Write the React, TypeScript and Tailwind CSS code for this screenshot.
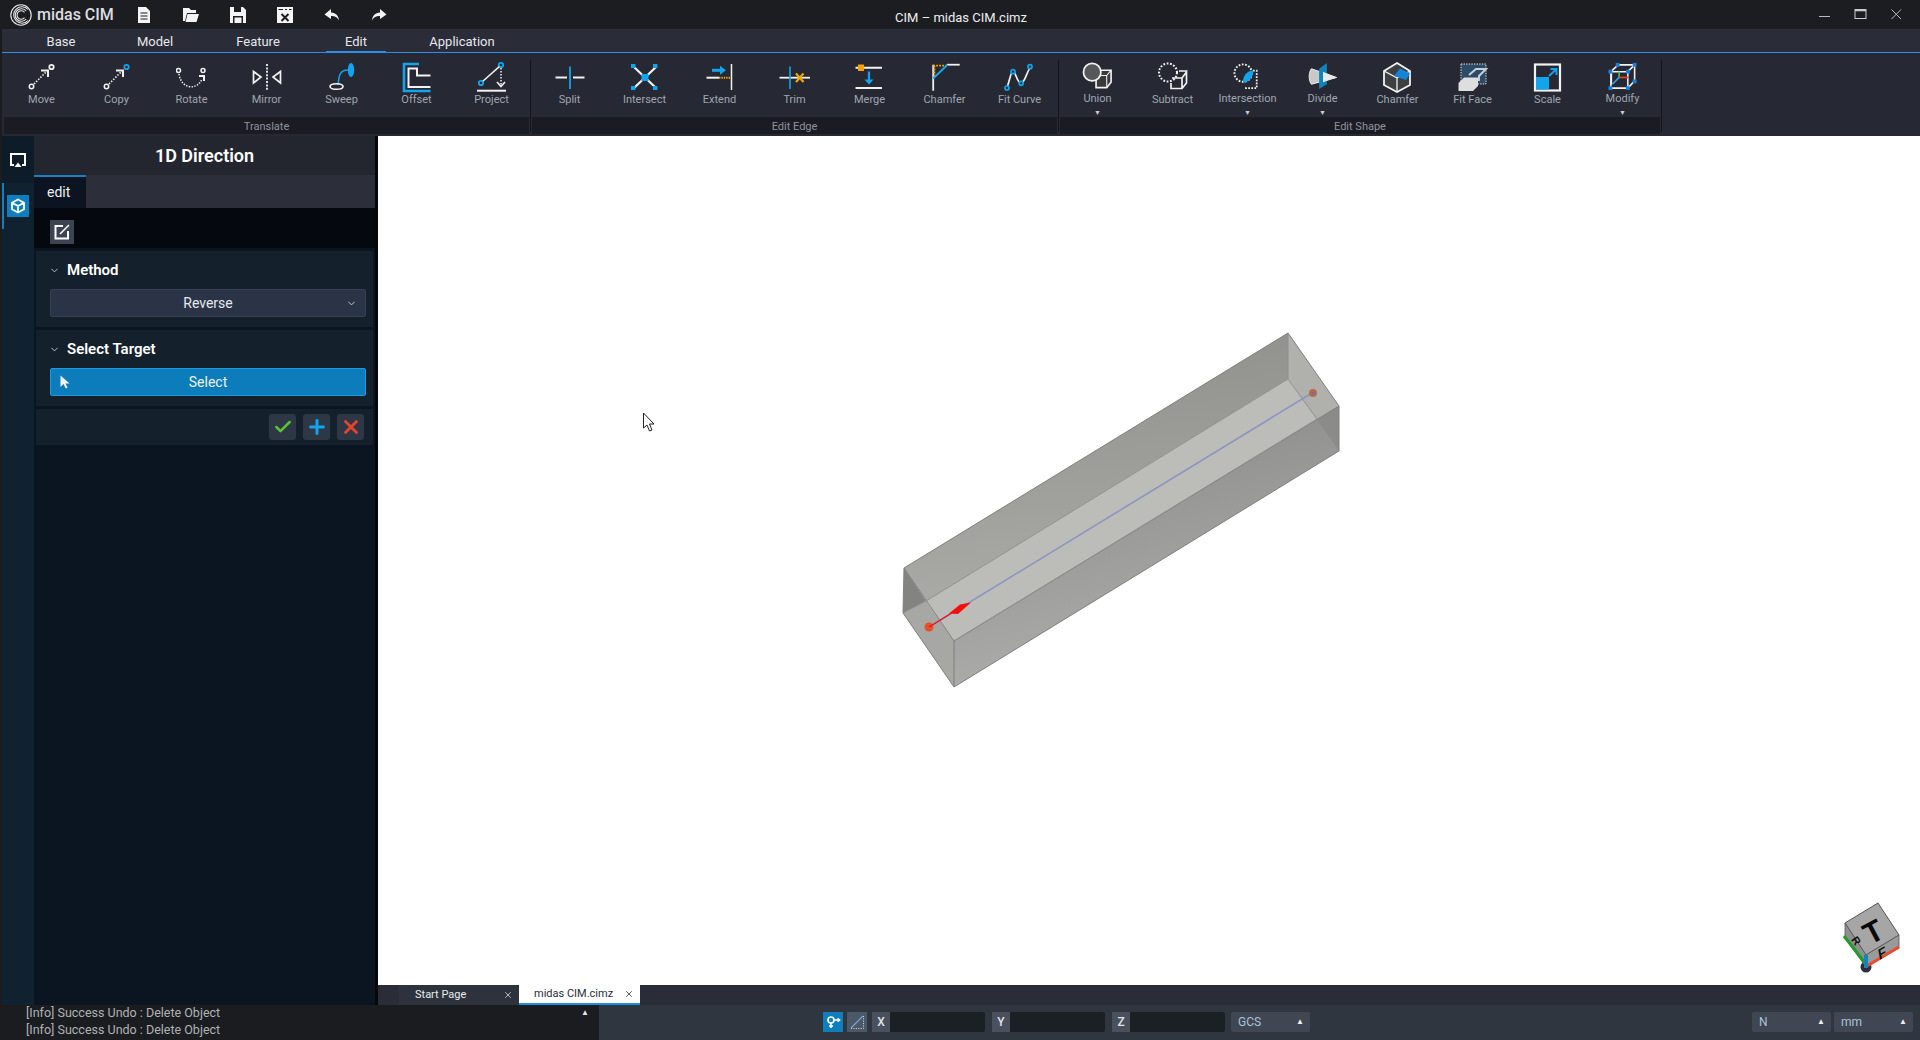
import React from 'react';
import { ChevronDown, Check, Plus, X } from 'lucide-react';

// ribbon icons, all drawn on a 32x32 box
const W = '#f2f2f2';
const B = '#12a5ee';
const O = '#f5a300';

const Ic: React.FC<{ children: React.ReactNode }> = ({ children }) => (
  <svg width="32" height="32" viewBox="0 0 32 32" fill="none" stroke={W} strokeWidth="1.5">
    {children}
  </svg>
);

const MoveGlyph = ({ tip }: { tip: string }) => (
  <>
    <circle cx="5.5" cy="25.5" r="2.2" />
    <circle cx="25.5" cy="6" r="2.2" stroke={tip} strokeWidth="1.8" />
    <path d="M8 23 L20 11" strokeDasharray="1.5 1.5" strokeWidth="1.6" />
    <path d="M15 9.5 H22 V16" strokeWidth="2" />
  </>
);

const Cube = ({ fill = 'none', dash }: { fill?: string; dash?: string }) => (
  <g strokeDasharray={dash} strokeWidth="1.7">
    <path d="M14 15 L19 9.5 H29.5 V22 L25 27.5 H14 Z" fill={fill} />
    <path d="M14 15 H25 V27.5 M25 15 L29.5 9.5" strokeWidth="1.1" />
  </g>
);

const ICONS: Record<string, React.ReactNode> = {
  move: <MoveGlyph tip={W} />,
  copy: <MoveGlyph tip={B} />,
  rotate: (
    <>
      <circle cx="2.5" cy="9.5" r="2" />
      <circle cx="27" cy="9.5" r="2" />
      <path d="M3 13 C5 28 21 30 26 18" strokeDasharray="1.4 1.4" />
      <path d="M23 15 H28 V20" strokeWidth="2" />
    </>
  ),
  mirror: (
    <>
      <path d="M16 3 V29" strokeDasharray="2 1.4" strokeWidth="1.8" />
      <path d="M2.5 10.5 L10 16 L2.5 22 Z" strokeWidth="1.7" />
      <path d="M29.5 10.5 L22 16 L29.5 22 Z" strokeWidth="1.7" />
    </>
  ),
  sweep: (
    <>
      <ellipse cx="25" cy="9" rx="3.2" ry="7" fill={B} stroke="none" />
      <path d="M22 9 C14 9 13 14 12 24" stroke={B} />
      <ellipse cx="10.5" cy="25.5" rx="6.5" ry="2.8" strokeWidth="1.6" />
    </>
  ),
  offset: (
    <>
      <path d="M29.5 30 H3 V3 H18" stroke={B} strokeWidth="2.6" />
      <path d="M29.5 26 H7.5 V7.5 H16 V14.5 H29.5" strokeWidth="2" />
    </>
  ),
  project: (
    <>
      <circle cx="25" cy="4" r="2.2" stroke={B} strokeWidth="1.8" />
      <circle cx="5" cy="22" r="2.2" stroke={B} strokeWidth="1.8" />
      <path d="M6.8 20.3 L23.3 5.6" />
      <path d="M25 7 V24" strokeDasharray="1.6 1.4" />
      <path d="M21 21 L25 25.5 L29 21" strokeWidth="1.6" />
      <path d="M1 29.7 H30" strokeWidth="2" />
    </>
  ),
  split: (
    <>
      <path d="M1.5 16.5 H13 M19 16.5 H30.5" strokeWidth="2" />
      <path d="M16 5.5 V28" stroke={B} strokeWidth="1.8" />
    </>
  ),
  intersect: (
    <>
      <path d="M5 6 L27 27 M27 6 L5 27" strokeWidth="2.2" />
      <g fill={B} stroke="none">
        <rect x="2" y="3" width="4.4" height="4" />
        <rect x="24" y="3" width="4.4" height="4" />
        <rect x="2" y="25" width="4.4" height="4" />
        <rect x="24" y="25" width="4.4" height="4" />
        <rect x="12.5" y="13" width="7" height="7" />
      </g>
    </>
  ),
  extend: (
    <>
      <path d="M2.5 16.7 H15" strokeWidth="2" />
      <path d="M15 16.7 H26" stroke={O} strokeWidth="2" strokeDasharray="1.4 1" />
      <path d="M27.5 3 V29" strokeWidth="1.5" />
      <path d="M8 9.3 H17" stroke={B} strokeWidth="3" />
      <path d="M16 4.8 L22 9.3 L16 13.8 Z" fill={B} stroke="none" />
    </>
  ),
  trim: (
    <>
      <path d="M0.5 16.7 H31" strokeWidth="1.8" />
      <path d="M11 5.5 V28" stroke={B} strokeWidth="1.6" />
      <path d="M17 12.5 L24.5 21 M24.5 12.5 L17 21" stroke={O} strokeWidth="2.2" />
    </>
  ),
  merge: (
    <>
      <path d="M1.5 6.7 H28 M1.5 27 H28" strokeWidth="2" />
      <rect x="4" y="3.5" width="6" height="6.5" fill={O} stroke="none" />
      <path d="M15 10.5 V20" stroke={B} strokeWidth="2.2" />
      <path d="M10.5 18.5 H19.5 L15 23.5 Z" fill={B} stroke="none" />
    </>
  ),
  chamfer: (
    <>
      <path d="M4.2 3.7 V29.7" strokeWidth="1.8" />
      <path d="M18 3.7 H30.7" strokeWidth="1.8" />
      <path d="M4.2 4.6 H18 M5.4 4.6 V17" stroke={O} strokeWidth="1.8" strokeDasharray="1.8 1.2" />
      <path d="M4.2 17.5 L18.5 3.7" stroke={B} strokeWidth="2" />
    </>
  ),
  fitcurve: (
    <>
      <path d="M3.5 25 C6 18 7 10 9 10.5 C12 11 13 22 17 22 C21 22 23 10 26 7" strokeWidth="1.7" />
      <g stroke={B} strokeWidth="1.7" fill="#262933">
        <circle cx="3" cy="27" r="2" />
        <circle cx="9" cy="10.7" r="2" />
        <circle cx="17.2" cy="22.3" r="2" />
        <circle cx="26" cy="5.7" r="2" />
      </g>
    </>
  ),
  union: (
    <>
      <Cube fill="#3a3a3d" />
      <circle cx="10" cy="11.5" r="9" fill="#55575a" strokeWidth="1.8" />
    </>
  ),
  subtract: (
    <>
      <path d="M15 17 H25 V27.5 H14 V22 M25 17 L29.5 11 V22 L25 27.5 M22 10 H29.5" strokeWidth="1.7" />
      <circle cx="11" cy="11.5" r="9" strokeDasharray="1.8 1.6" strokeWidth="2" />
    </>
  ),
  intersection: (
    <>
      <circle cx="11" cy="12.5" r="9" strokeDasharray="1.8 1.6" strokeWidth="2" />
      <path d="M13 28 H25 V10 H21" strokeDasharray="1.8 1.4" strokeWidth="1.8" />
      <path d="M11 22.5 C10 16 15 10 21.5 9.5 C22 16 17 22 11 22.5 Z" fill={B} stroke="none" />
    </>
  ),
  divide: (
    <>
      <path d="M4 8 L30 17 L4 24 C1 20 1 12 4 8 Z" fill="#c9c9c9" stroke="#f0f0f0" strokeWidth="1" />
      <path d="M12 8 L20 2 V24 L12 29 Z" fill="#1182b8" stroke="none" />
      <path d="M16 11 L30 17 L16 22 Z" fill="#e8e8e8" stroke="none" />
    </>
  ),
  chamfer3d: (
    <>
      <path d="M15 2 L28 10 V24 L15 31 L2 24 V10 Z" fill="#3e3f42" strokeWidth="1.8" />
      <path d="M2 10 L15 17 V31" strokeWidth="1.3" />
      <path d="M15 17 L28 10" strokeWidth="1.3" />
      <path d="M12 15 L18 7.5 L28 12.5 L24 19 Z" fill="#1583d6" stroke="none" />
    </>
  ),
  fitface: (
    <>
      <rect x="4" y="3" width="25" height="20" fill="#2c4b68" stroke="#e4e4e4" strokeDasharray="1.4 1.2" strokeWidth="1" />
      <path d="M12 14 L19 8 H29 L22 15 V20" stroke="#c9ced4" strokeWidth="2" />
      <path d="M1.5 22 L7 16.5 H21 V25 L16 30 H1.5 Z" fill="#dedede" stroke="none" />
    </>
  ),
  scale: (
    <>
      <rect x="3" y="3.5" width="25" height="26" strokeWidth="2.2" />
      <rect x="4" y="16" width="13" height="12.5" fill={B} stroke="none" />
      <path d="M17 15 L24 8.5 M18.5 8 H24.5 V14" stroke={B} strokeWidth="1.9" />
    </>
  ),
  modify: (
    <>
      <path d="M3.5 11 L11 4 H28 V20.5 L21 28 H3.5 Z M3.5 11 H21 V28 M21 11 L28 4" strokeWidth="1.6" />
      <path d="M4 12 V24" strokeWidth="1.6" />
      <g fill="#1a7fdc" stroke="none">
        <rect x="1" y="9" width="4" height="4" />
        <rect x="8.5" y="2" width="4" height="4" />
        <rect x="26" y="2" width="4" height="4" />
        <rect x="19" y="9" width="4" height="4" />
        <rect x="26" y="19" width="4" height="4" />
        <rect x="1" y="26" width="4" height="4" />
        <rect x="19" y="26" width="4" height="4" />
      </g>
      <path d="M12 17 V11" stroke="#36c24a" strokeWidth="1.8" />
      <path d="M12 17 H22" stroke="#e5442c" strokeWidth="1.8" />
      <path d="M12 17 L5 24" stroke="#2f9fe8" strokeWidth="1.8" />
    </>
  ),
};

type Tool = { label: string; icon: string; more?: boolean };

const GROUPS: { title: string; width: string; tools: Tool[] }[] = [
  {
    title: 'Translate',
    width: 'w-[525px]',
    tools: [
      { label: 'Move', icon: 'move' },
      { label: 'Copy', icon: 'copy' },
      { label: 'Rotate', icon: 'rotate' },
      { label: 'Mirror', icon: 'mirror' },
      { label: 'Sweep', icon: 'sweep' },
      { label: 'Offset', icon: 'offset' },
      { label: 'Project', icon: 'project' },
    ],
  },
  {
    title: 'Edit Edge',
    width: 'w-[525px]',
    tools: [
      { label: 'Split', icon: 'split' },
      { label: 'Intersect', icon: 'intersect' },
      { label: 'Extend', icon: 'extend' },
      { label: 'Trim', icon: 'trim' },
      { label: 'Merge', icon: 'merge' },
      { label: 'Chamfer', icon: 'chamfer' },
      { label: 'Fit Curve', icon: 'fitcurve' },
    ],
  },
  {
    title: 'Edit Shape',
    width: 'w-[600px]',
    tools: [
      { label: 'Union', icon: 'union', more: true },
      { label: 'Subtract', icon: 'subtract' },
      { label: 'Intersection', icon: 'intersection', more: true },
      { label: 'Divide', icon: 'divide', more: true },
      { label: 'Chamfer', icon: 'chamfer3d' },
      { label: 'Fit Face', icon: 'fitface' },
      { label: 'Scale', icon: 'scale' },
      { label: 'Modify', icon: 'modify', more: true },
    ],
  },
];

const MENU = [
  { label: 'Base', w: 'w-[118px]' },
  { label: 'Model', w: 'w-[70px]' },
  { label: 'Feature', w: 'w-[136px]' },
  { label: 'Edit', w: 'w-[60px]', active: true },
  { label: 'Application', w: 'w-[152px]' },
];

const Logo = () => (
  <svg width="22" height="22" viewBox="0 0 22 22" fill="none" stroke="#e8e8e8" strokeWidth="1.1">
    <circle cx="11" cy="11" r="10.2" />
    <path d="M18 5.5 A8.2 8.2 0 1 0 18 16.5" />
    <path d="M16.2 7 A6.2 6.2 0 1 0 16.2 15" />
    <path d="M14.5 8.3 A4.2 4.2 0 1 0 14.5 13.7" />
  </svg>
);

const QuickIcons = () => (
  <div className="flex items-center gap-[27px] ml-[20px]">
    <svg width="20" height="20" viewBox="0 0 20 20">
      <path d="M4 2 H12 L16 6 V18 H4 Z" fill="#f4f4f4" />
      <path d="M6.5 8 H13.5 M6.5 11 H13.5 M6.5 14 H13.5" stroke="#1c1d21" strokeWidth="1" />
    </svg>
    <svg width="20" height="20" viewBox="0 0 20 20">
      <path d="M2 3 H8 L10 5 H15 V8 H6 L4 16 H2 Z" fill="#f4f4f4" />
      <path d="M6.5 9 H18 L15.5 17 H4.5 Z" fill="#f4f4f4" />
    </svg>
    <svg width="20" height="20" viewBox="0 0 20 20">
      <path d="M2 2 H15 L18 5 V18 H2 Z" fill="#f4f4f4" />
      <rect x="6" y="2" width="7" height="5" fill="#1c1d21" />
      <rect x="5" y="11" width="10" height="7" fill="#1c1d21" />
      <rect x="6.5" y="12.5" width="7" height="5.5" fill="#f4f4f4" />
    </svg>
    <svg width="20" height="20" viewBox="0 0 20 20">
      <rect x="2" y="2" width="16" height="16" fill="#f4f4f4" />
      <path d="M3.5 4.5 H8 M10 4.5 H12 M14 4.5 H16.5" stroke="#1c1d21" strokeWidth="1.2" />
      <path d="M6.5 9 L13.5 16 M13.5 9 L6.5 16" stroke="#1c1d21" strokeWidth="2" />
    </svg>
    <svg width="20" height="20" viewBox="0 0 20 20">
      <path d="M9 4 L2.5 9.5 L9 14 V11 C13 11 15 12 17 15.5 C16.5 10.5 14 8 9 7.5 Z" fill="#f4f4f4" />
    </svg>
    <svg width="20" height="20" viewBox="0 0 20 20">
      <path d="M11 4 L17.5 9.5 L11 14 V11 C7 11 5 12 3 15.5 C3.5 10.5 6 8 11 7.5 Z" fill="#f4f4f4" />
    </svg>
  </div>
);

const RibbonGroup: React.FC<(typeof GROUPS)[number]> = ({ title, width, tools }) => (
  <div className={`${width} flex flex-col shrink-0`}>
    <div className="h-[64px] flex">
      {tools.map((t) => (
        <div key={t.label + t.icon} className="w-[75px] flex flex-col items-center pt-[8px]">
          <Ic>{ICONS[t.icon]}</Ic>
          <div className="text-[11px] leading-[14px] text-[#a0a6b2] whitespace-nowrap">{t.label}</div>
          {t.more && <div className="text-[7px] leading-[8px] mt-[3px] text-[#c8ccd2]">▼</div>}
        </div>
      ))}
    </div>
    <div className="h-[17px] bg-[#1b1c23] text-center text-[11px] leading-[19px] text-[#8f939d]">{title}</div>
  </div>
);

const Sep: React.FC<{ className: string }> = ({ className }) => (
  <div className={`${className} shrink-0 flex justify-center pt-[7px] pb-[2px]`}>
    <div className="w-[1px] bg-[#14151b]" />
  </div>
);

const SectionHead: React.FC<{ title: string }> = ({ title }) => (
  <div className="h-[38px] flex items-center pl-[13px] gap-[7px]">
    <ChevronDown size={11} color="#c8ced6" strokeWidth={2} />
    <span className="text-[15px] font-semibold text-white">{title}</span>
  </div>
);

const ActionBtn: React.FC<{ children: React.ReactNode }> = ({ children }) => (
  <div className="w-[27px] h-[26px] rounded-[3px] bg-[#2e3745] flex items-center justify-center">{children}</div>
);

const Panel = () => (
  <div className="w-[376px] shrink-0 flex bg-[#05070b]">
    <div className="w-[32px] shrink-0 bg-[#10212f] flex flex-col">
      <div className="h-[47px] bg-[#0e1c2a] flex items-center justify-center">
        <svg width="18" height="18" viewBox="0 0 18 18" fill="none" stroke="#fff" strokeWidth="2">
          <path d="M5 14 H2 V3 H16 V14 H13" />
          <path d="M5.5 16 L9 11.5 L12.5 16 Z" fill="#fff" stroke="none" />
        </svg>
      </div>
      <div className="h-[46px] border-l-2 border-[#1180c0] flex items-center justify-center pr-[2px]">
        <div className="w-[22px] h-[22px] bg-[#0e7fbc] flex items-center justify-center">
          <svg width="16" height="16" viewBox="0 0 16 16" fill="none" stroke="#fff" strokeWidth="1.8">
            <path d="M8 1.5 L14 4.7 V11.3 L8 14.5 L2 11.3 V4.7 Z M2 4.7 L8 8 L14 4.7 M8 8 V14.5" />
          </svg>
        </div>
      </div>
    </div>

    <div className="w-[341px] shrink-0 flex flex-col bg-[#0b1522]">
      <div className="h-[39px] bg-[#23262e] flex items-center justify-center text-[18px] font-semibold text-white">1D Direction</div>
      <div className="h-[33px] bg-[#2c2f39] flex">
        <div className="w-[52px] border-t-2 border-[#1c7fc4] bg-[#0b1420] pl-[13px] text-[14px] leading-[31px] text-[#eef0f3]">edit</div>
      </div>
      <div className="h-[40px] bg-[#05090f] flex items-start pl-[16px] pt-[12px]">
        <div className="w-[24px] h-[24px] bg-[#3b4450] flex items-center justify-center">
          <svg width="18" height="18" viewBox="0 0 18 18" fill="none" stroke="#fff" strokeWidth="2">
            <path d="M10 3 H2.5 V15.5 H15 V8" />
            <path d="M7 11 L16 2" strokeWidth="1.6" />
          </svg>
        </div>
      </div>

      <div className="mx-[2px] mt-[3px] h-[76px] bg-[#15202d] flex flex-col">
        <SectionHead title="Method" />
        <div className="ml-[14px] mr-[7px] h-[28px] rounded-[2px] bg-[#2b3446] border border-[#364053] flex items-center relative justify-center text-[14px] text-[#e6e9ee]">
          Reverse
          <ChevronDown size={11} color="#d0d4da" strokeWidth={2} className="absolute right-[8px]" />
        </div>
      </div>

      <div className="mx-[2px] mt-[3px] h-[76px] bg-[#15202d] flex flex-col">
        <SectionHead title="Select Target" />
        <div className="ml-[14px] mr-[7px] h-[28px] rounded-[2px] bg-[#0c7cba] border border-[#1a9be0] flex items-center relative justify-center text-[14px] text-[#eef3f7]">
          <svg width="10" height="14" viewBox="0 0 10 14" className="absolute left-[9px]">
            <path d="M0.5 0.5 V12 L3.5 9 L5.8 13.5 L7.6 12.6 L5.4 8.4 H9.5 Z" fill="#f4f4f4" />
          </svg>
          Select
        </div>
      </div>

      <div className="mx-[2px] mt-[3px] h-[36px] bg-[#15202d] flex items-center justify-end gap-[7px] pr-[9px] pb-[1px]">
        <ActionBtn><Check size={20} color="#58c23c" strokeWidth={3} /></ActionBtn>
        <ActionBtn><Plus size={22} color="#12a5ee" strokeWidth={3.2} /></ActionBtn>
        <ActionBtn><X size={22} color="#e5442c" strokeWidth={3} /></ActionBtn>
      </div>
    </div>
    <div className="w-[3px] shrink-0" />
  </div>
);

const Scene = () => (
  <svg className="flex-1 min-h-0 w-full block" viewBox="378 136 1542 849">
    <defs>
      <linearGradient id="back" x1="0" y1="0" x2="0.1" y2="1">
        <stop offset="0" stopColor="#8f8f8c" />
        <stop offset="1" stopColor="#a9a9a5" />
      </linearGradient>
      <linearGradient id="front" x1="0" y1="0" x2="0.3" y2="1">
        <stop offset="0" stopColor="#868686" />
        <stop offset="1" stopColor="#adadab" />
      </linearGradient>
    </defs>
    {/* bar in x-ray view */}
    <polygon points="904,568 1288,333 1288,379 926,601" fill="url(#back)" />
    <polygon points="926,601 1288,379 1317,419 954,641" fill="#bcbcb8" />
    <polygon points="954,641 1339,406 1339,451 954,687" fill="url(#front)" />
    <polygon points="1288,333 1339,406 1317,419 1288,379" fill="#b0b0ac" />
    <polygon points="1317,419 1339,406 1339,451" fill="#8b8b8a" />
    <polygon points="904,568 926,601 903,613" fill="#838381" />
    <polygon points="903,613 926,601 954,641 954,687" fill="#a7a7a4" />
    <g fill="none" stroke="#7f7f7c" strokeWidth="1">
      <path d="M904,568 L1288,333 L1339,406 L954,641 Z" />
      <path d="M904,568 L903,613 L954,687 L1339,451 L1339,406 M954,641 V687" />
      <path d="M926,601 L1288,379 L1288,333 M1288,379 L1317,419 L954,641 M926,601 L903,613" stroke="#8e8e8b" />
    </g>
    <line x1="929" y1="627" x2="1312" y2="393" stroke="#8d94c0" strokeWidth="1.6" />
    <circle cx="1313" cy="393" r="4" fill="#b86a45" />
    <circle cx="1313" cy="393" r="1.5" fill="#6b6bc0" />
    <circle cx="929" cy="627" r="4.5" fill="#e5502c" />
    <path d="M929,627 L955,611" stroke="#f01010" strokeWidth="1.4" />
    <polygon points="971,602.5 960,604.5 949,613.5 958,614" fill="#f01010" />
    {/* mouse pointer */}
    <path d="M643.5,413 V428 L647,425 L649.5,431 L652,430 L649.5,424 H654 Z" fill="#fff" stroke="#222" strokeWidth="1" />
    {/* view cube */}
    <circle cx="1866" cy="967" r="5.5" fill="#2b3038" />
    <polygon points="1845,923 1878,903 1899,935 1866,955" fill="#a6a6a6" stroke="#555" strokeWidth="1" />
    <polygon points="1845,923 1866,955 1866,967 1845,938" fill="#8f8f8f" stroke="#555" strokeWidth="0.8" />
    <polygon points="1866,955 1899,935 1899,948 1866,967" fill="#9a9a9a" stroke="#555" strokeWidth="0.8" />
    <path d="M1844,936 L1865,963" stroke="#1f9a2c" strokeWidth="3" />
    <path d="M1867,966 L1899,947" stroke="#ea4a2e" strokeWidth="3" />
    <path d="M1866,955 V968" stroke="#1482c4" strokeWidth="4" />
    <text x="0" y="0" transform="translate(1878,941) rotate(-28)" textAnchor="middle" fontSize="30" fontWeight="700" fill="#0a0a0a" fontFamily="Liberation Sans">T</text>
    <text x="0" y="0" transform="translate(1883,958) rotate(-30) skewX(-20)" textAnchor="middle" fontSize="14" fontWeight="700" fill="#111" fontFamily="Liberation Sans">F</text>
    <text x="0" y="0" transform="translate(1853,943) rotate(55)" textAnchor="middle" fontSize="11" fontWeight="700" fill="#111" fontFamily="Liberation Sans">R</text>
  </svg>
);

const AxisInput: React.FC<{ axis: string; last?: boolean }> = ({ axis, last }) => (
  <div className={`flex h-[20px] w-[113px] ${last ? '' : 'mr-[7px]'}`}>
    <div className="w-[18px] bg-[#4b515c] text-center text-[12px] leading-[20px] font-medium text-[#dfe3e8]">{axis}</div>
    <div className="flex-1 bg-[#1b2025] rounded-r-[2px]" />
  </div>
);

const UnitSelect: React.FC<{ label: string; className: string }> = ({ label, className }) => (
  <div className={`${className} h-[20px] bg-[#404652] rounded-[2px] flex items-center justify-between pl-[7px] pr-[6px] text-[12px] text-[#a9c4d8]`}>
    {label}
    <span className="text-[8px] text-[#eceef0]">▲</span>
  </div>
);

const StatusBar = () => (
  <div className="h-[35px] shrink-0 flex bg-[#2f3640]">
    <div className="w-[599px] shrink-0 bg-[#1b1c20] pl-[26px] flex justify-between pr-[10px]">
      <div className="text-[12.5px] leading-[17px] mt-[-1px] text-[#b0b2b6]">
        <div>[Info] Success Undo : Delete Object</div>
        <div>[Info] Success Undo : Delete Object</div>
      </div>
      <span className="text-[8px] leading-[16px] text-[#e4e4e4]">▲</span>
    </div>
    <div className="flex items-center pl-[224px] pb-[1px]">
      <div className="w-[20px] h-[20px] bg-[#0e7fbc] flex items-center justify-center mr-[4px]">
        <svg width="16" height="16" viewBox="0 0 16 16" fill="none" stroke="#fff" strokeWidth="1.6">
          <circle cx="6" cy="6" r="3" />
          <path d="M6 9 V14 M4 12 H8 M9 6 H14" />
          <path d="M12.5 4.5 L14.5 6 L12.5 7.5" />
        </svg>
      </div>
      <div className="w-[20px] h-[20px] bg-[#4b5866] flex items-center justify-center mr-[5px]">
        <svg width="16" height="16" viewBox="0 0 16 16" fill="none" stroke="#6fa8e0" strokeWidth="1.1">
          <path d="M2 14 L14 2" />
          <path d="M2 14.5 H14.5 V2" stroke="#e4e8ee" strokeDasharray="1.2 1.2" strokeWidth="0.8" />
        </svg>
      </div>
      <AxisInput axis="X" />
      <AxisInput axis="Y" />
      <AxisInput axis="Z" last />
      <UnitSelect label="GCS" className="w-[79px] ml-[6px]" />
      <UnitSelect label="N" className="w-[79px] ml-[442px]" />
      <UnitSelect label="mm" className="w-[79px] ml-[3px]" />
    </div>
  </div>
);

export default function App() {
  return (
    <div className="w-[1920px] h-[1040px] flex flex-col overflow-hidden bg-[#1b1c20] [font-family:Roboto,sans-serif]">
      {/* title bar */}
      <div className="h-[29px] shrink-0 bg-[#1c1d21] flex items-center">
        <div className="w-[400px] shrink-0 flex items-center pl-[10px]">
          <Logo />
          <span className="ml-[5px] text-[16px] font-medium text-[#dcdde0] whitespace-nowrap">midas CIM</span>
          <QuickIcons />
        </div>
        <div className="flex-1 text-center text-[13px] pt-[6px] text-[#eceef0]">CIM – midas CIM.cimz</div>
        <div className="w-[398px] shrink-0 flex justify-end items-center gap-[21px] pr-[16px]">
          <svg width="15" height="15" viewBox="0 0 15 15" stroke="#b8bcc0" strokeWidth="1">
            <path d="M2 9.5 H13" />
          </svg>
          <svg width="15" height="15" viewBox="0 0 15 15" fill="none" stroke="#c6ced2" strokeWidth="1">
            <rect x="2" y="2.5" width="11" height="9" />
            <path d="M2 3.5 H13" strokeWidth="1.6" />
          </svg>
          <svg width="15" height="15" viewBox="0 0 15 15" stroke="#b8bcc0" strokeWidth="1">
            <path d="M2.5 2.5 L12 12 M12 2.5 L2.5 12" />
          </svg>
        </div>
      </div>

      <div className="flex-1 min-h-0 flex flex-col ml-[2px]">
        {/* menu tabs */}
        <div className="h-[24px] shrink-0 bg-[#2a2c38] border-b border-[#2f8fe8] flex">
          {MENU.map((m) => (
            <div
              key={m.label}
              className={`${m.w} shrink-0 text-center text-[13px] leading-[26px] text-[#e6e8ee] ${m.active ? 'border-b-2 border-[#2f8fe8] h-[24px]' : ''}`}
            >
              {m.label}
            </div>
          ))}
        </div>

        {/* ribbon */}
        <div className="h-[83px] shrink-0 bg-[#262933] flex pl-[2px]">
          <div className="flex h-[81px]">
            <RibbonGroup {...GROUPS[0]} />
            <Sep className="w-[3px]" />
            <RibbonGroup {...GROUPS[1]} />
            <Sep className="w-[3px]" />
            <RibbonGroup {...GROUPS[2]} />
            <Sep className="w-[2px]" />
          </div>
        </div>

        <div className="flex-1 min-h-0 flex">
          <Panel />
          <div className="flex-1 min-w-0 flex flex-col bg-white">
            <Scene />
            <div className="h-[20px] shrink-0 bg-[#2a2c38] flex pl-[21px]">
              <div className="w-[120px] bg-[#2d323c] flex items-center justify-between pl-[16px] pr-[6px] text-[11px] text-[#eaecef]">
                Start Page
                <X size={10} color="#d0d3d8" />
              </div>
              <div className="w-[121px] bg-white border-b-2 border-[#1b8fe0] flex items-center justify-between pl-[15px] pr-[6px] text-[11px] text-[#2a2c38]">
                midas CIM.cimz
                <X size={10} color="#3a3c44" />
              </div>
            </div>
          </div>
        </div>
      </div>
      <StatusBar />
    </div>
  );
}
